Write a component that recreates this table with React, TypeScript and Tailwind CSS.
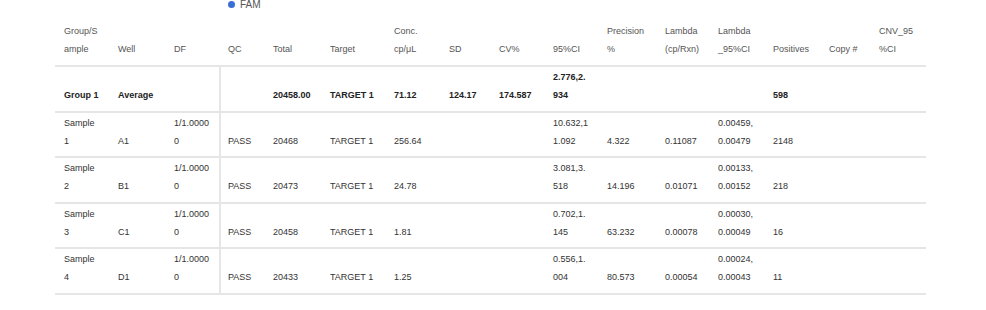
// 결과 테이블 (FAM 채널) 스크린샷 재현
type Cell = string[]

const COLS =
  'grid grid-cols-[54px_56px_56px_43px_57px_64px_55px_50px_54px_54px_58px_53px_55px_56px_50px_56px]'

const header: Cell[] = [
  ['Group/S', 'ample'], ['Well'], ['DF'], ['QC'], ['Total'], ['Target'],
  ['Conc.', 'cp/μL'], ['SD'], ['CV%'], ['95%CI'], ['Precision', '%'],
  ['Lambda', '(cp/Rxn)'], ['Lambda', '_95%CI'], ['Positives'], ['Copy #'], ['CNV_95', '%CI'],
]

const groupRow: Cell[] = [
  ['Group 1'], ['Average'], [], [], ['20458.00'], ['TARGET 1'], ['71.12'], ['124.17'],
  ['174.587'], ['2.776,2.', '934'], [], [], [], ['598'], [], [],
]

const samples = [
  { n: '1', well: 'A1', total: '20468', conc: '256.64', ci: ['10.632,1', '1.092'], prec: '4.322', lam: '0.11087', lci: ['0.00459,', '0.00479'], pos: '2148' },
  { n: '2', well: 'B1', total: '20473', conc: '24.78', ci: ['3.081,3.', '518'], prec: '14.196', lam: '0.01071', lci: ['0.00133,', '0.00152'], pos: '218' },
  { n: '3', well: 'C1', total: '20458', conc: '1.81', ci: ['0.702,1.', '145'], prec: '63.232', lam: '0.00078', lci: ['0.00030,', '0.00049'], pos: '16' },
  { n: '4', well: 'D1', total: '20433', conc: '1.25', ci: ['0.556,1.', '004'], prec: '80.573', lam: '0.00054', lci: ['0.00024,', '0.00043'], pos: '11' },
]

const sampleRows: Cell[][] = samples.map((s) => [
  ['Sample', s.n], [s.well], ['1/1.0000', '0'], ['PASS'], [s.total], ['TARGET 1'], [s.conc],
  [], [], s.ci, [s.prec], [s.lam], s.lci, [s.pos], [], [],
])

function Row({ cells, body, bold }: { cells: Cell[]; body?: boolean; bold?: boolean }) {
  return (
    <div className={`${COLS} border-b-2 border-[#e6e6e6]`}>
      {cells.map((c, i) => (
        <div
          key={i}
          className={[
            'flex flex-col justify-end whitespace-nowrap',
            i === 3 ? 'pl-[7px]' : 'pl-[9px]',
            body ? 'pt-px pb-[6.5px]' : 'pb-[7px]',
            body && i === 2 ? 'border-r-2 border-[#e6e6e6]' : '',
          ].join(' ')}
        >
          {c.map((line, j) => (
            <span key={j} className={`block leading-[18px] h-[18px] ${bold ? 'font-bold text-[#222]' : ''}`}>
              {line}
            </span>
          ))}
        </div>
      ))}
    </div>
  )
}

export default function App() {
  return (
    <div className="w-[986px] h-[310px] bg-white overflow-hidden font-['Liberation_Sans',Arial,sans-serif] text-[9px] text-[#333]">
      {/* ── 범례 ───────────────────────────── */}
      <div className="flex items-center gap-[5px] pl-[228px] -mt-[5px] h-[18px] text-[#555] text-[10px]">
        <span className="w-[7px] h-[7px] rounded-full bg-[#3a6fd6]" />
        <span>FAM</span>
      </div>

      {/* ── 테이블 ─────────────────────────── */}
      <div className="ml-[55px] w-[871px] mt-[9px]">
        <div className="text-[#555]">
          <Row cells={header} />
        </div>
        <Row cells={groupRow} body bold />
        {sampleRows.map((r, i) => (
          <Row key={i} cells={r} body />
        ))}
      </div>
    </div>
  )
}
